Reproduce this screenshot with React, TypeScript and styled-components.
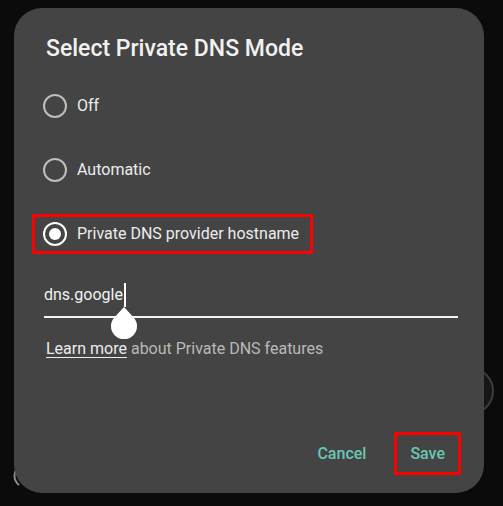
import React from "react";
import styled, { createGlobalStyle } from "styled-components";

const Global = createGlobalStyle`
  html, body { margin: 0; padding: 0; background: #0b0b0b; }
  body { font-family: Roboto, "Noto Sans", sans-serif; }
  * { box-sizing: border-box; }
`;

const Screen = styled.div`
  position: relative;
  width: 503px;
  height: 506px;
  overflow: hidden;
  background: #0b0b0b;
  padding: 8px 0 0 14px;
`;

const BackRing = styled.div`
  position: absolute;
  left: 446px;
  top: 367px;
  width: 48px;
  height: 48px;
  border-radius: 50%;
  border: 2px solid #3c3c3c;
  background: #161616;
`;

const BackArc = styled.svg`
  position: absolute;
  left: 10px;
  top: 464px;
`;

const Dialog = styled.div`
  position: relative;
  z-index: 1;
  width: 470px;
  height: 485px;
  border-radius: 28px;
  background: #444444;
  display: flex;
  flex-direction: column;
`;

const Title = styled.h1`
  margin: 27px 0 0 32px;
  font-size: 23px;
  line-height: 28px;
  font-weight: 500;
  color: #f1f1f1;
`;

const Options = styled.div`
  margin-top: 11px;
  display: flex;
  flex-direction: column;
`;

const OptionRow = styled.div`
  height: 64px;
  display: flex;
  align-items: center;
  padding-left: 18px;
`;

const OptionLabel = styled.label<{ $marked?: boolean }>`
  display: inline-flex;
  align-items: center;
  gap: 10px;
  padding: 5px 11px 5px 8px;
  border: 3px solid ${(p) => (p.$marked ? "#ff0000" : "transparent")};
  font-size: 16px;
  line-height: 24px;
  color: #ececec;
  cursor: pointer;
`;

const Radio = styled.span<{ $checked?: boolean }>`
  width: 24px;
  height: 24px;
  border-radius: 50%;
  border: 2px solid ${(p) => (p.$checked ? "#ffffff" : "#bdbdbd")};
  display: flex;
  align-items: center;
  justify-content: center;
  flex: none;
  &::after {
    content: "";
    width: 12px;
    height: 12px;
    border-radius: 50%;
    background: #ffffff;
    display: ${(p) => (p.$checked ? "block" : "none")};
  }
`;

const Field = styled.div`
  position: relative;
  margin: 17px 26px 0 30px;
  height: 35px;
  border-bottom: 2px solid #f4f4f4;
  display: flex;
  align-items: flex-start;
`;

const FieldText = styled.span`
  font-size: 16px;
  line-height: 24px;
  color: #f2f2f2;
`;

const Caret = styled.span`
  width: 2px;
  height: 24px;
  background: #ffffff;
  margin-left: 1px;
`;

const Handle = styled.svg`
  position: absolute;
  left: 66px;
  top: 24px;
`;

const Help = styled.p`
  margin: 21px 0 0 32px;
  font-size: 16px;
  line-height: 20px;
  color: #b9b9b9;
`;

const HelpLink = styled.a`
  color: #ececec;
  text-decoration: underline;
  text-underline-offset: 3px;
  text-decoration-thickness: 1px;
`;

const Spacer = styled.div`
  flex: 1;
`;

const Actions = styled.div`
  display: flex;
  justify-content: flex-end;
  align-items: center;
  gap: 12px;
  padding: 0 23px 18px 0;
`;

const ActionButton = styled.button<{ $marked?: boolean }>`
  background: none;
  border: 3px solid ${(p) => (p.$marked ? "#ff0000" : "transparent")};
  padding: 7px 13px 7px 13px;
  font-family: Roboto, "Noto Sans", sans-serif;
  font-size: 16px;
  line-height: 23px;
  font-weight: 500;
  color: #6ac7b5;
  cursor: pointer;
`;

const options = [
  { label: "Off", checked: false },
  { label: "Automatic", checked: false },
  { label: "Private DNS provider hostname", checked: true },
];

export default function App() {
  return (
    <>
      <Global />
      <Screen>
        <BackRing />
        <BackArc width="16" height="24" viewBox="0 0 16 24">
          <path d="M9 3 C3 8 3 16 9 21" stroke="#8a8a8a" strokeWidth="2" fill="none" />
          <path d="M13 7 C9 10 9 15 13 18" stroke="#6a6a6a" strokeWidth="1.5" fill="none" />
        </BackArc>
        <Dialog>
          <Title>Select Private DNS Mode</Title>
          <Options>
            {options.map((o) => (
              <OptionRow key={o.label}>
                <OptionLabel $marked={o.checked}>
                  <Radio $checked={o.checked} />
                  {o.label}
                </OptionLabel>
              </OptionRow>
            ))}
          </Options>
          <Field>
            <FieldText>dns.google</FieldText>
            <Caret />
            <Handle width="28" height="32" viewBox="0 0 28 32">
              <path d="M14 0 L23.2 10.1 A13 13 0 1 1 4.8 10.1 Z" fill="#ffffff" />
            </Handle>
          </Field>
          <Help>
            <HelpLink>Learn more</HelpLink> about Private DNS features
          </Help>
          <Spacer />
          <Actions>
            <ActionButton>Cancel</ActionButton>
            <ActionButton $marked>Save</ActionButton>
          </Actions>
        </Dialog>
      </Screen>
    </>
  );
}
